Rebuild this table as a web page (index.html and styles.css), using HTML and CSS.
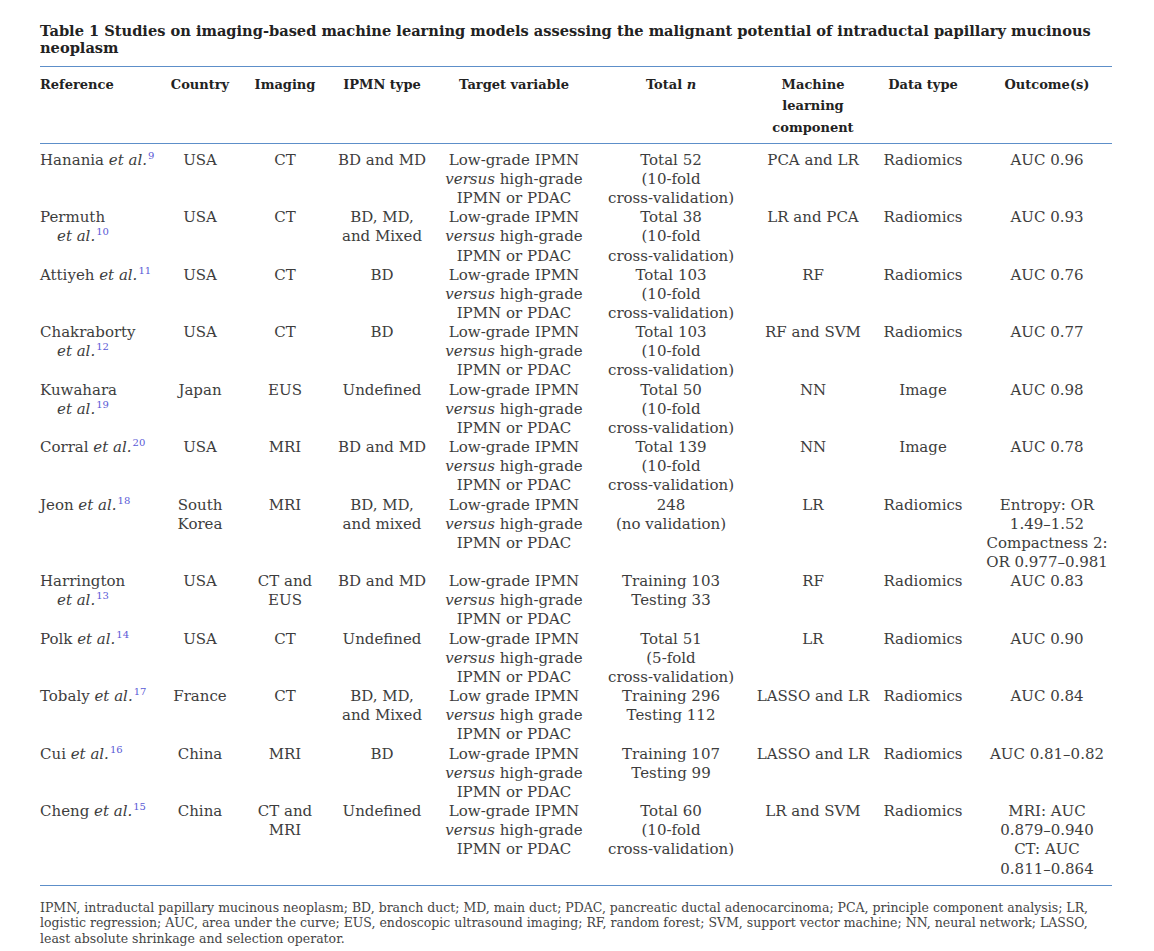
FILE: index.html
```html
<!DOCTYPE html>
<html lang="en">
<head>
    <meta charset="UTF-8">
    <meta name="viewport" content="width=device-width, initial-scale=1.0">
    <title>Table 1 - IPMN machine learning studies</title>
    <link rel="stylesheet" href="styles.css">
</head>
<body>
    <div class="table-wrap">
        <div class="table-title">Table 1 Studies on imaging-based machine learning models assessing the malignant potential of intraductal papillary mucinous neoplasm</div>
        <table class="study-table">
            <colgroup>
                <col class="c-ref">
                <col class="c-country">
                <col class="c-imaging">
                <col class="c-type">
                <col class="c-target">
                <col class="c-total">
                <col class="c-ml">
                <col class="c-data">
                <col class="c-outcome">
            </colgroup>
            <thead>
                <tr>
                    <th class="ref">Reference</th>
                    <th>Country</th>
                    <th>Imaging</th>
                    <th>IPMN type</th>
                    <th>Target variable</th>
                    <th>Total <i>n</i></th>
                    <th>Machine<br>learning<br>component</th>
                    <th>Data type</th>
                    <th class="outcome">Outcome(s)</th>
                </tr>
            </thead>
            <tbody>
                <tr>
                    <td class="ref">Hanania <i>et al.</i><sup>9</sup></td>
                    <td>USA</td>
                    <td>CT</td>
                    <td>BD and MD</td>
                    <td>Low-grade IPMN<br><i>versus</i> high-grade<br>IPMN or PDAC</td>
                    <td>Total 52<br>(10-fold<br>cross-validation)</td>
                    <td>PCA and LR</td>
                    <td>Radiomics</td>
                    <td class="outcome">AUC 0.96</td>
                </tr>
                <tr>
                    <td class="ref">Permuth<br><i>et al.</i><sup>10</sup></td>
                    <td>USA</td>
                    <td>CT</td>
                    <td>BD, MD,<br>and Mixed</td>
                    <td>Low-grade IPMN<br><i>versus</i> high-grade<br>IPMN or PDAC</td>
                    <td>Total 38<br>(10-fold<br>cross-validation)</td>
                    <td>LR and PCA</td>
                    <td>Radiomics</td>
                    <td class="outcome">AUC 0.93</td>
                </tr>
                <tr>
                    <td class="ref">Attiyeh <i>et al.</i><sup>11</sup></td>
                    <td>USA</td>
                    <td>CT</td>
                    <td>BD</td>
                    <td>Low-grade IPMN<br><i>versus</i> high-grade<br>IPMN or PDAC</td>
                    <td>Total 103<br>(10-fold<br>cross-validation)</td>
                    <td>RF</td>
                    <td>Radiomics</td>
                    <td class="outcome">AUC 0.76</td>
                </tr>
                <tr>
                    <td class="ref">Chakraborty<br><i>et al.</i><sup>12</sup></td>
                    <td>USA</td>
                    <td>CT</td>
                    <td>BD</td>
                    <td>Low-grade IPMN<br><i>versus</i> high-grade<br>IPMN or PDAC</td>
                    <td>Total 103<br>(10-fold<br>cross-validation)</td>
                    <td>RF and SVM</td>
                    <td>Radiomics</td>
                    <td class="outcome">AUC 0.77</td>
                </tr>
                <tr>
                    <td class="ref">Kuwahara<br><i>et al.</i><sup>19</sup></td>
                    <td>Japan</td>
                    <td>EUS</td>
                    <td>Undefined</td>
                    <td>Low-grade IPMN<br><i>versus</i> high-grade<br>IPMN or PDAC</td>
                    <td>Total 50<br>(10-fold<br>cross-validation)</td>
                    <td>NN</td>
                    <td>Image</td>
                    <td class="outcome">AUC 0.98</td>
                </tr>
                <tr>
                    <td class="ref">Corral <i>et al.</i><sup>20</sup></td>
                    <td>USA</td>
                    <td>MRI</td>
                    <td>BD and MD</td>
                    <td>Low-grade IPMN<br><i>versus</i> high-grade<br>IPMN or PDAC</td>
                    <td>Total 139<br>(10-fold<br>cross-validation)</td>
                    <td>NN</td>
                    <td>Image</td>
                    <td class="outcome">AUC 0.78</td>
                </tr>
                <tr>
                    <td class="ref">Jeon <i>et al.</i><sup>18</sup></td>
                    <td>South<br>Korea</td>
                    <td>MRI</td>
                    <td>BD, MD,<br>and mixed</td>
                    <td>Low-grade IPMN<br><i>versus</i> high-grade<br>IPMN or PDAC</td>
                    <td>248<br>(no validation)</td>
                    <td>LR</td>
                    <td>Radiomics</td>
                    <td class="outcome">Entropy: OR<br>1.49–1.52<br>Compactness 2:<br>OR 0.977–0.981</td>
                </tr>
                <tr>
                    <td class="ref">Harrington<br><i>et al.</i><sup>13</sup></td>
                    <td>USA</td>
                    <td>CT and<br>EUS</td>
                    <td>BD and MD</td>
                    <td>Low-grade IPMN<br><i>versus</i> high-grade<br>IPMN or PDAC</td>
                    <td>Training 103<br>Testing 33</td>
                    <td>RF</td>
                    <td>Radiomics</td>
                    <td class="outcome">AUC 0.83</td>
                </tr>
                <tr>
                    <td class="ref">Polk <i>et al.</i><sup>14</sup></td>
                    <td>USA</td>
                    <td>CT</td>
                    <td>Undefined</td>
                    <td>Low-grade IPMN<br><i>versus</i> high-grade<br>IPMN or PDAC</td>
                    <td>Total 51<br>(5-fold<br>cross-validation)</td>
                    <td>LR</td>
                    <td>Radiomics</td>
                    <td class="outcome">AUC 0.90</td>
                </tr>
                <tr>
                    <td class="ref">Tobaly <i>et al.</i><sup>17</sup></td>
                    <td>France</td>
                    <td>CT</td>
                    <td>BD, MD,<br>and Mixed</td>
                    <td>Low grade IPMN<br><i>versus</i> high grade<br>IPMN or PDAC</td>
                    <td>Training 296<br>Testing 112</td>
                    <td>LASSO and LR</td>
                    <td>Radiomics</td>
                    <td class="outcome">AUC 0.84</td>
                </tr>
                <tr>
                    <td class="ref">Cui <i>et al.</i><sup>16</sup></td>
                    <td>China</td>
                    <td>MRI</td>
                    <td>BD</td>
                    <td>Low-grade IPMN<br><i>versus</i> high-grade<br>IPMN or PDAC</td>
                    <td>Training 107<br>Testing 99</td>
                    <td>LASSO and LR</td>
                    <td>Radiomics</td>
                    <td class="outcome">AUC 0.81–0.82</td>
                </tr>
                <tr>
                    <td class="ref">Cheng <i>et al.</i><sup>15</sup></td>
                    <td>China</td>
                    <td>CT and<br>MRI</td>
                    <td>Undefined</td>
                    <td>Low-grade IPMN<br><i>versus</i> high-grade<br>IPMN or PDAC</td>
                    <td>Total 60<br>(10-fold<br>cross-validation)</td>
                    <td>LR and SVM</td>
                    <td>Radiomics</td>
                    <td class="outcome">MRI: AUC<br>0.879–0.940<br>CT: AUC<br>0.811–0.864</td>
                </tr>
            </tbody>
        </table>
        <div class="table-notes">IPMN, intraductal papillary mucinous neoplasm; BD, branch duct; MD, main duct; PDAC, pancreatic ductal adenocarcinoma; PCA, principle component analysis; LR, logistic regression; AUC, area under the curve; EUS, endoscopic ultrasound imaging; RF, random forest; SVM, support vector machine; NN, neural network; LASSO, least absolute shrinkage and selection operator.</div>
    </div>
</body>
</html>
```

FILE: styles.css
```css
body {
    margin: 0;
    background-color: #fff;
    font-family: "DejaVu Serif", "Liberation Serif", serif;
    color: #3d3d3d;
}
.table-wrap {
    width: 1072px;
    padding: 22px 0 0 40px;
}
.table-title {
    font-size: 14.6px;
    line-height: 17px;
    font-weight: bold;
    color: #222;
    margin-bottom: 10px;
}
.study-table {
    width: 1072px;
    border-collapse: collapse;
    table-layout: fixed;
    font-size: 15px;
    line-height: 19.15px;
}
.c-ref { width: 122px; }
.c-country { width: 76px; }
.c-imaging { width: 94px; }
.c-type { width: 100px; }
.c-target { width: 164px; }
.c-total { width: 150px; }
.c-ml { width: 134px; }
.c-data { width: 86px; }
.c-outcome { width: 146px; }
.study-table thead tr {
    border-top: 1.5px solid #5d8fc9;
    border-bottom: 1.5px solid #5d8fc9;
}
.study-table th {
    font-weight: bold;
    font-size: 13px;
    line-height: 21.4px;
    color: #222;
    text-align: center;
    vertical-align: top;
    padding: 7px 0 4.5px 0;
}
.study-table td {
    text-align: center;
    vertical-align: top;
    padding: 0;
    white-space: nowrap;
}
.study-table th.ref {
    text-align: left;
}
.study-table td.ref {
    text-align: left;
    padding-left: 17px;
    text-indent: -17px;
}
.study-table .outcome {
    padding-left: 16px;
}
.study-table tbody tr:first-child td {
    padding-top: 7px;
}
.study-table tbody tr:last-child td {
    padding-bottom: 6px;
}
.study-table tbody tr:last-child {
    border-bottom: 1.5px solid #5d8fc9;
}
.study-table sup {
    font-size: 10px;
    line-height: 0;
    color: #5a5ad6;
    vertical-align: 6px;
    margin-left: 1px;
}
.table-notes {
    margin-top: 14px;
    font-size: 12.5px;
    line-height: 15.5px;
    color: #444;
}
```
